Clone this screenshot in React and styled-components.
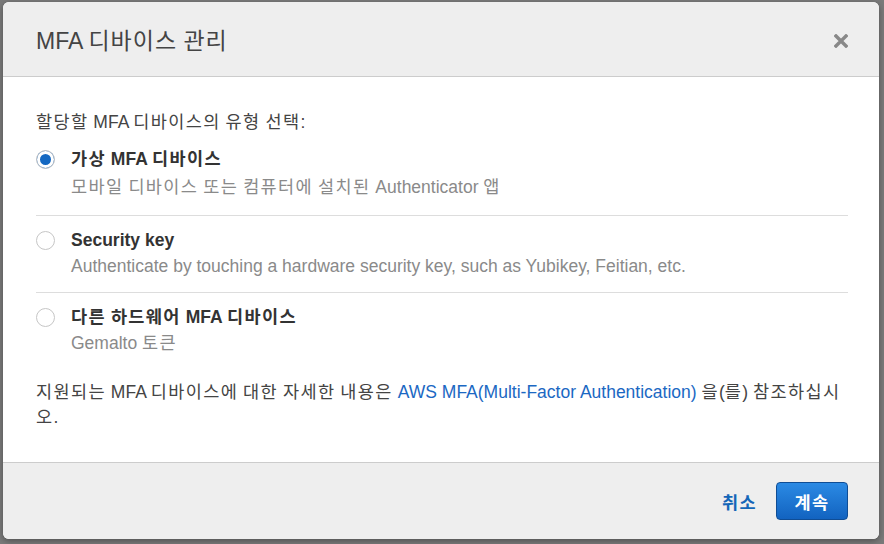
import React, { useState } from "react";
import styled, { createGlobalStyle } from "styled-components";

const Global = createGlobalStyle`
  html, body { margin: 0; padding: 0; }
  body {
    background: #7a7a7a;
    font-family: "Liberation Sans", Arial, "Noto Sans CJK KR", sans-serif;
    width: 884px;
    height: 544px;
    overflow: hidden;
  }
`;

const Backdrop = styled.div`
  width: 884px;
  height: 544px;
  box-sizing: border-box;
  padding: 2px 5px 5px 3px;
  display: flex;
`;

const Modal = styled.div`
  width: 876px;
  height: 537px;
  background: #fff;
  border-radius: 6px;
  box-shadow: 0 2px 6px rgba(0, 0, 0, 0.35);
  display: flex;
  flex-direction: column;
  overflow: hidden;
`;

const Header = styled.div`
  height: 74px;
  background: #eeeeee;
  border-bottom: 1px solid #cccccc;
  display: flex;
  align-items: center;
  justify-content: space-between;
  padding: 0 31px 0 33px;
  flex-shrink: 0;
`;

const Title = styled.h2`
  margin: 0;
  font-size: 23px;
  font-weight: normal;
  color: #444;
  --ko-spacing: 1px;
`;

const Ko = styled.span`
  letter-spacing: var(--ko-spacing, 0.08em);
`;

const Close = styled.button`
  border: none;
  background: none;
  padding: 0;
  width: 14px;
  height: 14px;
  margin-top: 4px;
  cursor: pointer;
  display: flex;
`;

const Body = styled.div`
  flex: 1;
  padding: 33px 31px 0 33px;
  color: #444;
  font-size: 17.5px;
`;

const Prompt = styled.div`
  line-height: 24px;
  margin-bottom: 12px;
`;

const Option = styled.label`
  display: flex;
  gap: 16px;
  padding: ${(p) => (p.$first ? "0 0 15px" : "11px 0 13px")};
  border-bottom: ${(p) => (p.$last ? "none" : "1px solid #dddddd")};
  cursor: pointer;
`;

const Radio = styled.span`
  width: 17px;
  height: 17px;
  border-radius: 50%;
  border: 1px solid #c6c6c6;
  background: ${(p) => (p.$checked ? "#1468c2" : "#fff")};
  box-shadow: ${(p) => (p.$checked ? "inset 0 0 0 3px #fff" : "none")};
  flex-shrink: 0;
  margin-top: 4px;
`;

const OptionText = styled.div`
  display: flex;
  flex-direction: column;
`;

const OptionTitle = styled.div`
  font-weight: bold;
  color: #333;
  line-height: 26px;
`;

const OptionDesc = styled.div`
  color: #8a8a8a;
  line-height: 26px;
  margin-top: ${(p) => (p.$gap ? "2px" : "0")};
`;

const Note = styled.p`
  margin: 11px 0 0;
  line-height: 25px;
  color: #444;
`;

const Link = styled.a`
  color: #1b68c3;
  text-decoration: none;
`;

const Footer = styled.div`
  height: 76px;
  background: #eeeeee;
  border-top: 1px solid #cccccc;
  display: flex;
  align-items: center;
  justify-content: flex-end;
  gap: 19px;
  padding: 0 31px 0 0;
  flex-shrink: 0;
`;

const TextButton = styled.button`
  border: none;
  background: none;
  font: inherit;
  font-size: 17.5px;
  font-weight: bold;
  color: #1466b8;
  padding: 0;
  cursor: pointer;
`;

const PrimaryButton = styled.button`
  width: 72px;
  height: 38px;
  border-radius: 4px;
  border: 1px solid #0f4d95;
  background: linear-gradient(#2b8ae4, #1263c0);
  color: #fff;
  font: inherit;
  font-size: 17.5px;
  font-weight: bold;
  cursor: pointer;
`;

const HANGUL = /([\uAC00-\uD7A3]+)/;
const ko = (s) =>
  s.split(HANGUL).map((part, i) =>
    HANGUL.test(part) ? <Ko key={i}>{part}</Ko> : part
  );

const options = [
  { title: "가상 MFA 디바이스", desc: "모바일 디바이스 또는 컴퓨터에 설치된 Authenticator 앱" },
  { title: "Security key", desc: "Authenticate by touching a hardware security key, such as Yubikey, Feitian, etc." },
  { title: "다른 하드웨어 MFA 디바이스", desc: "Gemalto 토큰" },
];

export default function App() {
  const [sel, setSel] = useState(0);
  return (
    <>
      <Global />
      <Backdrop>
        <Modal>
          <Header>
            <Title>{ko("MFA 디바이스 관리")}</Title>
            <Close aria-label="close">
              <svg width="14" height="14" viewBox="0 0 14 14">
                <path d="M2 2 L12 12 M12 2 L2 12" stroke="#888" strokeWidth="3.4" strokeLinecap="square" />
              </svg>
            </Close>
          </Header>
          <Body>
            <Prompt>{ko("할당할 MFA 디바이스의 유형 선택:")}</Prompt>
            {options.map((o, i) => (
              <Option key={i} $first={i === 0} $last={i === options.length - 1} onClick={() => setSel(i)}>
                <Radio $checked={sel === i} />
                <OptionText>
                  <OptionTitle>{ko(o.title)}</OptionTitle>
                  <OptionDesc $gap={i === 0}>{ko(o.desc)}</OptionDesc>
                </OptionText>
              </Option>
            ))}
            <Note>
              {ko("지원되는 MFA 디바이스에 대한 자세한 내용은 ")}
              <Link href="#">AWS MFA(Multi-Factor Authentication)</Link>
              {ko(" 을(를) 참조하십시오.")}
            </Note>
          </Body>
          <Footer>
            <TextButton>{ko("취소")}</TextButton>
            <PrimaryButton>{ko("계속")}</PrimaryButton>
          </Footer>
        </Modal>
      </Backdrop>
    </>
  );
}
